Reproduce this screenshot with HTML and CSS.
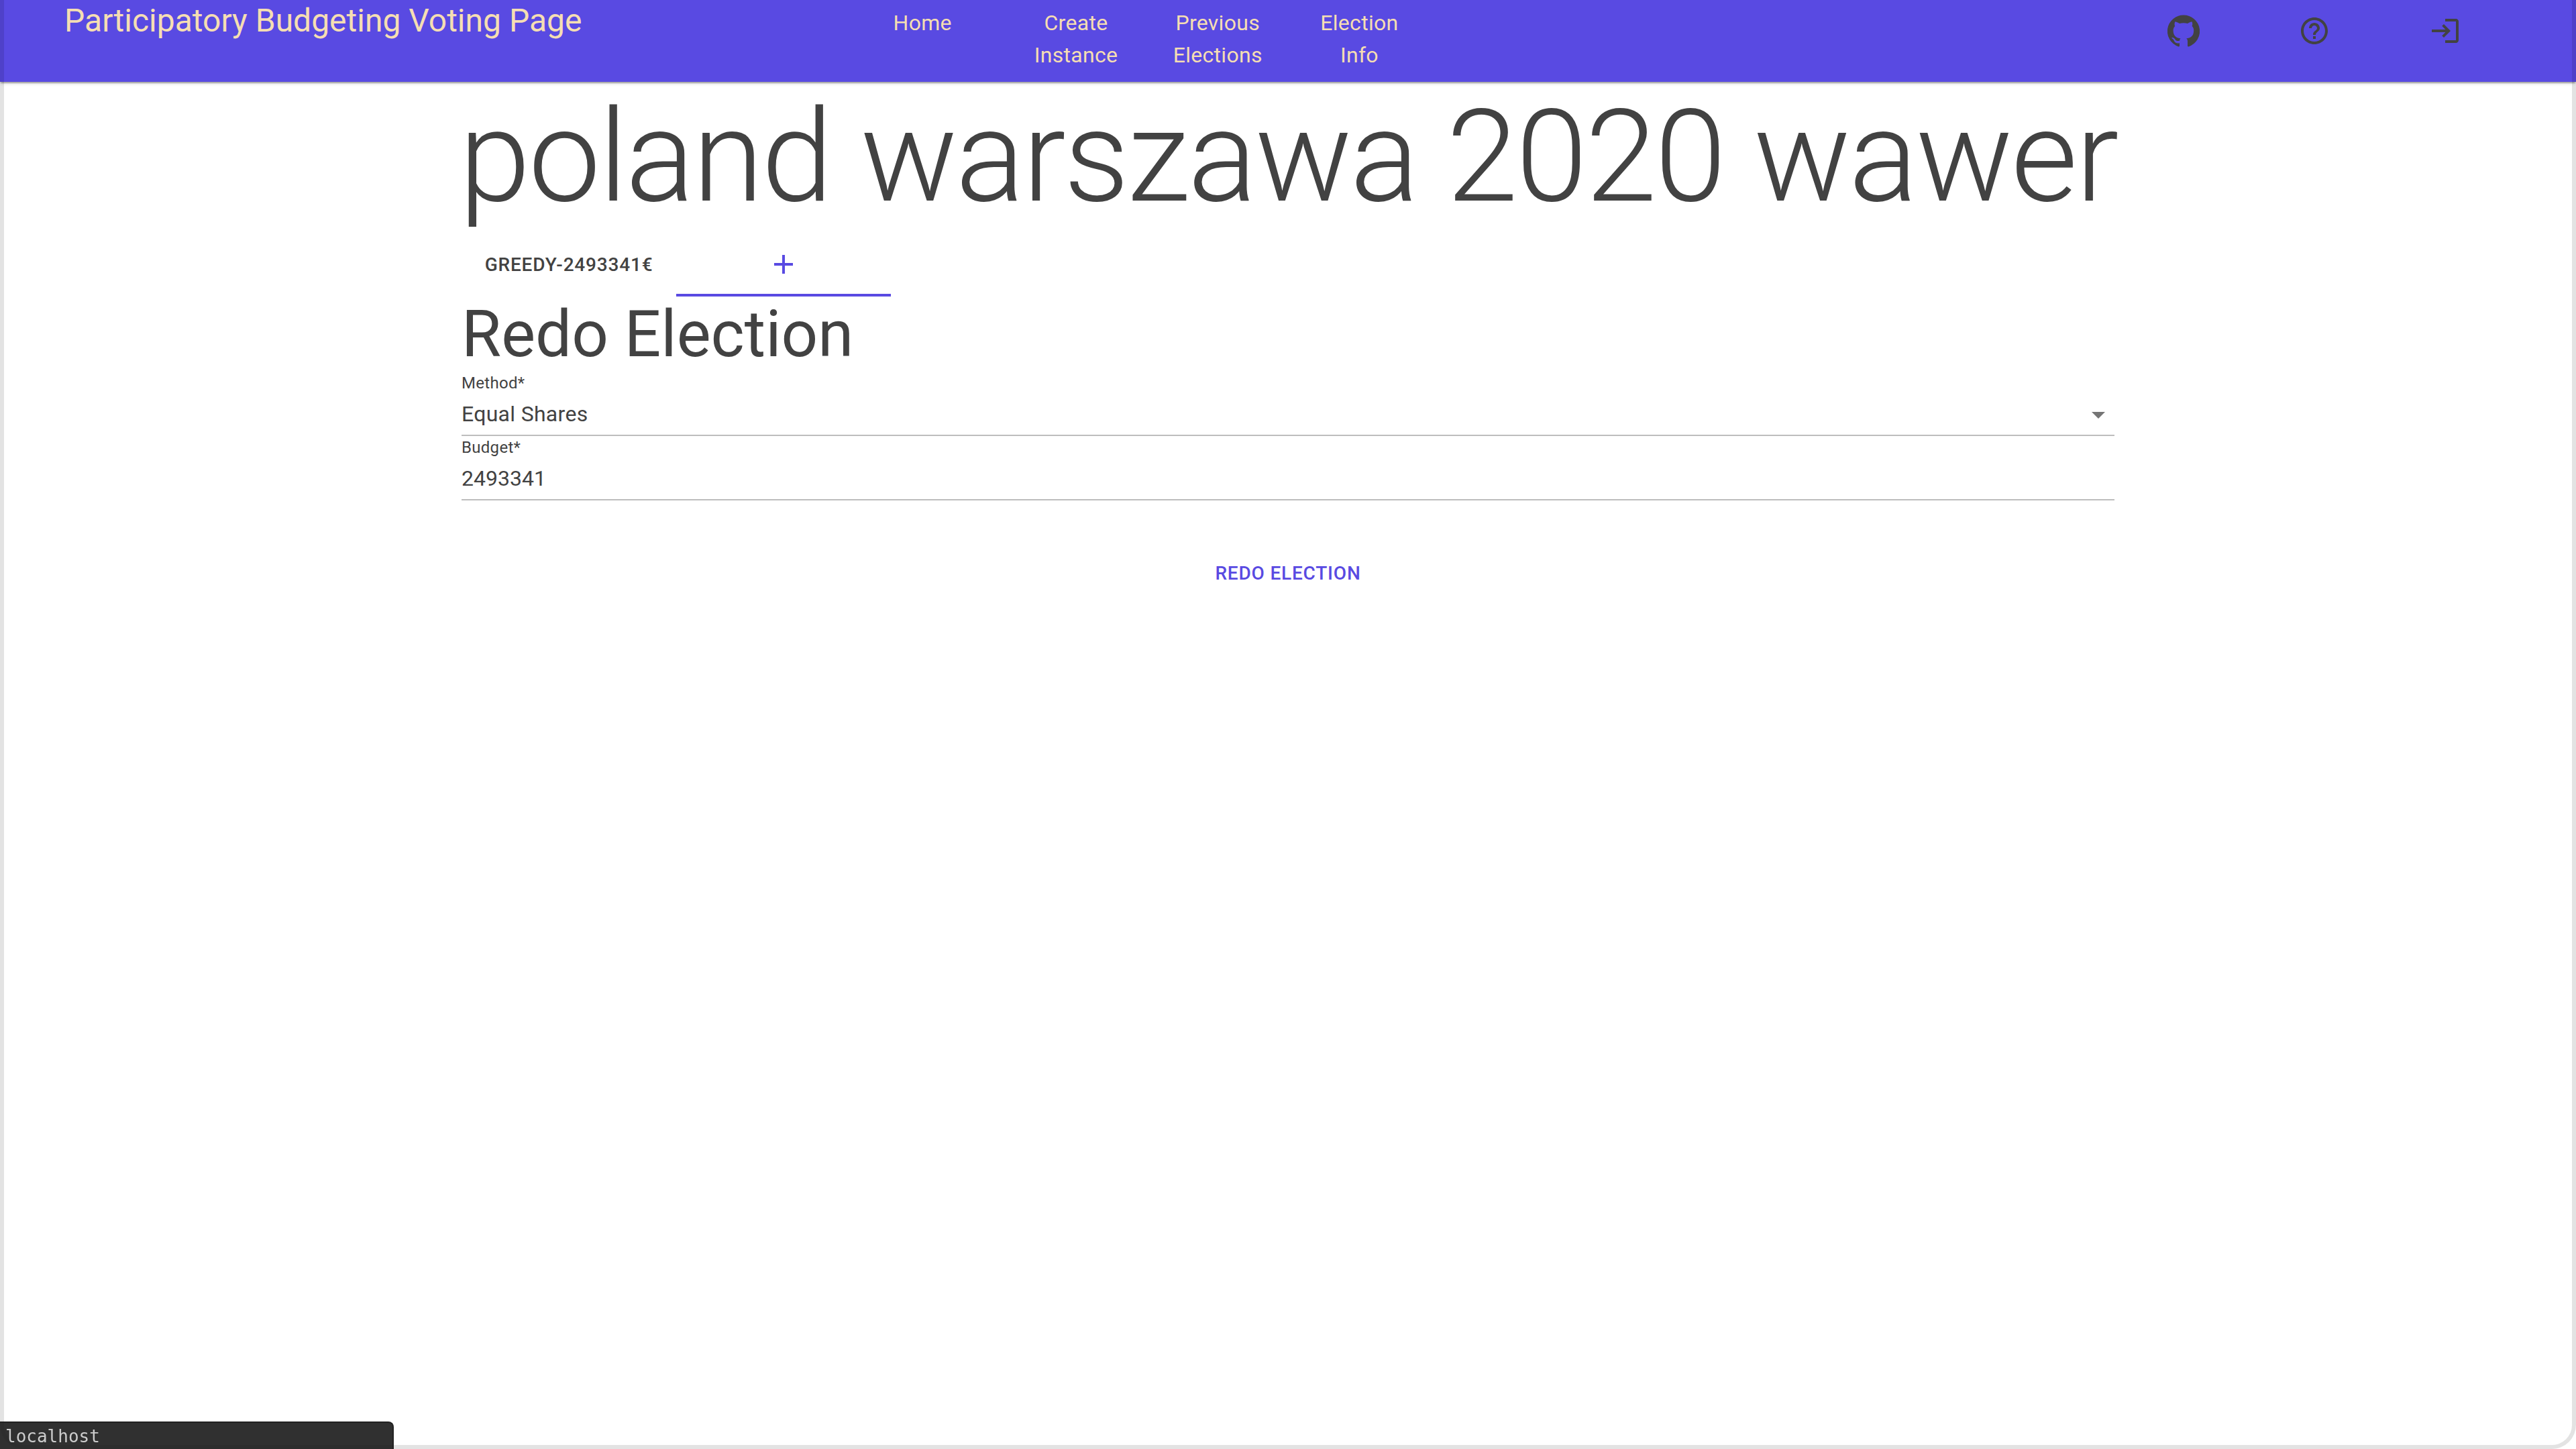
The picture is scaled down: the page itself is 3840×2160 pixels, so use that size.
FILE: index.html
```html
<!DOCTYPE html>
<html lang="en">
<head>
<meta charset="utf-8">
<title>Participatory Budgeting Voting Page</title>
<meta name="viewport" content="width=device-width, initial-scale=1">
<link rel="stylesheet" href="styles.css">
</head>
<body>
<header class="appbar">
  <a class="brand" href="#">Participatory Budgeting Voting Page</a>
  <nav class="nav">
    <a class="nav-link" href="#">Home</a>
    <a class="nav-link" href="#">Create Instance</a>
    <a class="nav-link" href="#">Previous Elections</a>
    <a class="nav-link" href="#">Election Info</a>
  </nav>
  <div class="actions">
    <a class="action" href="#" aria-label="GitHub"><svg class="icon" viewBox="0 0 24 24"><path d="M12 .3a12 12 0 0 0-3.8 23.4c.6.1.8-.3.8-.6v-2c-3.3.7-4-1.6-4-1.6-.6-1.4-1.4-1.8-1.4-1.8-1-.7.1-.7.1-.7 1.2 0 1.9 1.2 1.9 1.2 1 1.8 2.8 1.3 3.5 1 0-.8.4-1.3.7-1.6-2.7-.3-5.5-1.3-5.5-6 0-1.2.5-2.3 1.3-3.1-.2-.4-.6-1.6 0-3.2 0 0 1-.3 3.4 1.2a11.5 11.5 0 0 1 6 0c2.3-1.5 3.3-1.2 3.3-1.2.6 1.6.2 2.8 0 3.2.9.8 1.3 1.9 1.3 3.2 0 4.6-2.8 5.6-5.5 5.9.5.4.9 1 .9 2.2v3.3c0 .3.1.7.8.6A12 12 0 0 0 12 .3"/></svg></a>
    <a class="action" href="#" aria-label="Help"><svg class="icon" viewBox="0 0 24 24"><path d="M11 18h2v-2h-2v2zm1-16C6.480 2 2 6.480 2 12s4.480 10 10 10 10-4.480 10-10S17.520 2 12 2zm0 18c-4.410 0-8-3.590-8-8s3.590-8 8-8 8 3.590 8 8-3.590 8-8 8zm0-14c-2.210 0-4 1.790-4 4h2c0-1.100.9-2 2-2s2 .9 2 2c0 2-3 1.750-3 5h2c0-2.250 3-2.500 3-5 0-2.210-1.790-4-4-4z"/></svg></a>
    <a class="action" href="#" aria-label="Log in"><svg class="icon" viewBox="0 0 24 24"><path d="M11 7L9.600 8.400l2.600 2.600H2v2h10.200l-2.600 2.600L11 17l5-5-5-5zm9 12h-8v2h8c1.100 0 2-.9 2-2V5c0-1.100-.9-2-2-2h-8v2h8v14z"/></svg></a>
  </div>
</header>

<main class="container">
  <h1 class="title">poland warszawa 2020 wawer</h1>
  <div class="tabs" role="tablist">
    <button class="tab" type="button" role="tab" aria-selected="false">GREEDY-2493341€</button>
    <button class="tab tab-active" type="button" role="tab" aria-selected="true" aria-label="Add election"><svg class="icon" viewBox="0 0 24 24"><path d="M19 13h-6v6h-2v-6H5v-2h6V5h2v6h6v2z"/></svg></button>
  </div>
  <form class="form">
    <h3 class="subtitle">Redo Election</h3>
    <div class="field">
      <label class="label" for="method">Method*</label>
      <div class="select">
        <select class="control" id="method"><option>Equal Shares</option></select>
        <svg class="icon select-arrow" viewBox="0 0 24 24"><path d="M7 10l5 5 5-5z"/></svg>
      </div>
    </div>
    <div class="field">
      <label class="label" for="budget">Budget*</label>
      <input class="control" id="budget" type="text" inputmode="numeric" value="2493341">
    </div>
    <button class="submit" type="button">REDO ELECTION</button>
  </form>
</main>

<div class="frame"></div>
<div class="status">localhost</div>
</body>
</html>
```
FILE: styles.css
```css
:root {
  --primary: #594ae2;
  --text: #424242;
  --line: #bdbdbd;
}

* { box-sizing: border-box; }

body {
  margin: 0;
  background: #fff;
  color: var(--text);
  font-family: Roboto, "Liberation Sans", sans-serif;
  font-size: 32px;
  line-height: 48px;
  letter-spacing: .00938em;
}

a { color: inherit; text-decoration: none; }

button, input, select {
  margin: 0;
  border: 0;
  border-radius: 0;
  padding: 0;
  background: none;
  color: inherit;
  font: inherit;
  letter-spacing: inherit;
  outline: 0;
}

input { letter-spacing: normal; }

.icon {
  display: block;
  width: 48px;
  height: 48px;
  fill: currentColor;
}

/* App bar */
.appbar {
  position: relative;
  display: grid;
  grid-template-columns: 1156fr 880fr 1026fr 584fr;
  min-height: 122px;
  padding: 0 98px 0 96px;
  background: var(--primary);
  box-shadow: 0 4px 2px -2px rgba(0, 0, 0, .2), 0 2px 2px rgba(0, 0, 0, .14), 0 2px 6px rgba(0, 0, 0, .12);
}

.brand {
  color: wheat;
  font-size: 48px;
  line-height: 62px;
  letter-spacing: normal;
}

.nav {
  display: grid;
  grid-template-columns: 7fr 6fr 6fr 6fr;
  padding-top: 10px;
  color: wheat;
  text-align: center;
}

.nav-link { padding: 0 24px; }

.actions {
  grid-column: 4;
  display: grid;
  grid-template-columns: repeat(3, 1fr);
  justify-items: center;
  padding-top: 22px;
}

/* Page content */
.container {
  max-width: 2560px;
  margin: 0 auto;
  padding: 0 48px;
}

.title {
  display: flex;
  justify-content: center;
  margin: 0;
  font-size: 192px;
  font-weight: 300;
  line-height: 224px;
  letter-spacing: -.01562em;
  white-space: nowrap;
}

.subtitle {
  margin: 0;
  font-size: 96px;
  font-weight: 400;
  line-height: 112px;
  letter-spacing: normal;
}

.tabs { display: flex; }

.tab, .submit {
  font-size: 28px;
  font-weight: 500;
  line-height: 49px;
  letter-spacing: .02857em;
}

.tab {
  display: flex;
  align-items: center;
  justify-content: center;
  width: 320px;
  height: 96px;
}

.tab-active {
  color: var(--primary);
  box-shadow: inset 0 -4px var(--primary);
}

.form {
  display: flex;
  flex-direction: column;
}

.field {
  display: flex;
  flex-direction: column;
  border-bottom: 2px solid var(--line);
}

.label {
  font-size: 24px;
  line-height: 34px;
}

.control {
  width: 100%;
  height: 60px;
  padding-bottom: 2px;
  appearance: none;
}

.select {
  display: grid;
  align-items: center;
}

.select > * { grid-area: 1 / 1; }

.select-arrow {
  justify-self: end;
  color: #757575;
  pointer-events: none;
}

.submit {
  align-self: center;
  margin-top: 72px;
  padding: 12px 16px;
  color: var(--primary);
}

/* Window edge and link status, laid over the page */
.frame {
  position: fixed;
  inset: 0;
  border: 6px solid rgba(0, 0, 0, .11);
  border-top: 0;
  border-radius: 0 0 36px 36px;
  pointer-events: none;
}

.status {
  position: fixed;
  bottom: 0;
  left: 0;
  width: 587px;
  height: 41px;
  padding: 0 8px;
  border: solid #222;
  border-width: 2px 2px 0 0;
  border-radius: 0 8px 0 0;
  background: rgba(22, 22, 22, .89);
  color: #ccc;
  font: 26px/40px "DejaVu Sans Mono", monospace;
  letter-spacing: normal;
}
```
